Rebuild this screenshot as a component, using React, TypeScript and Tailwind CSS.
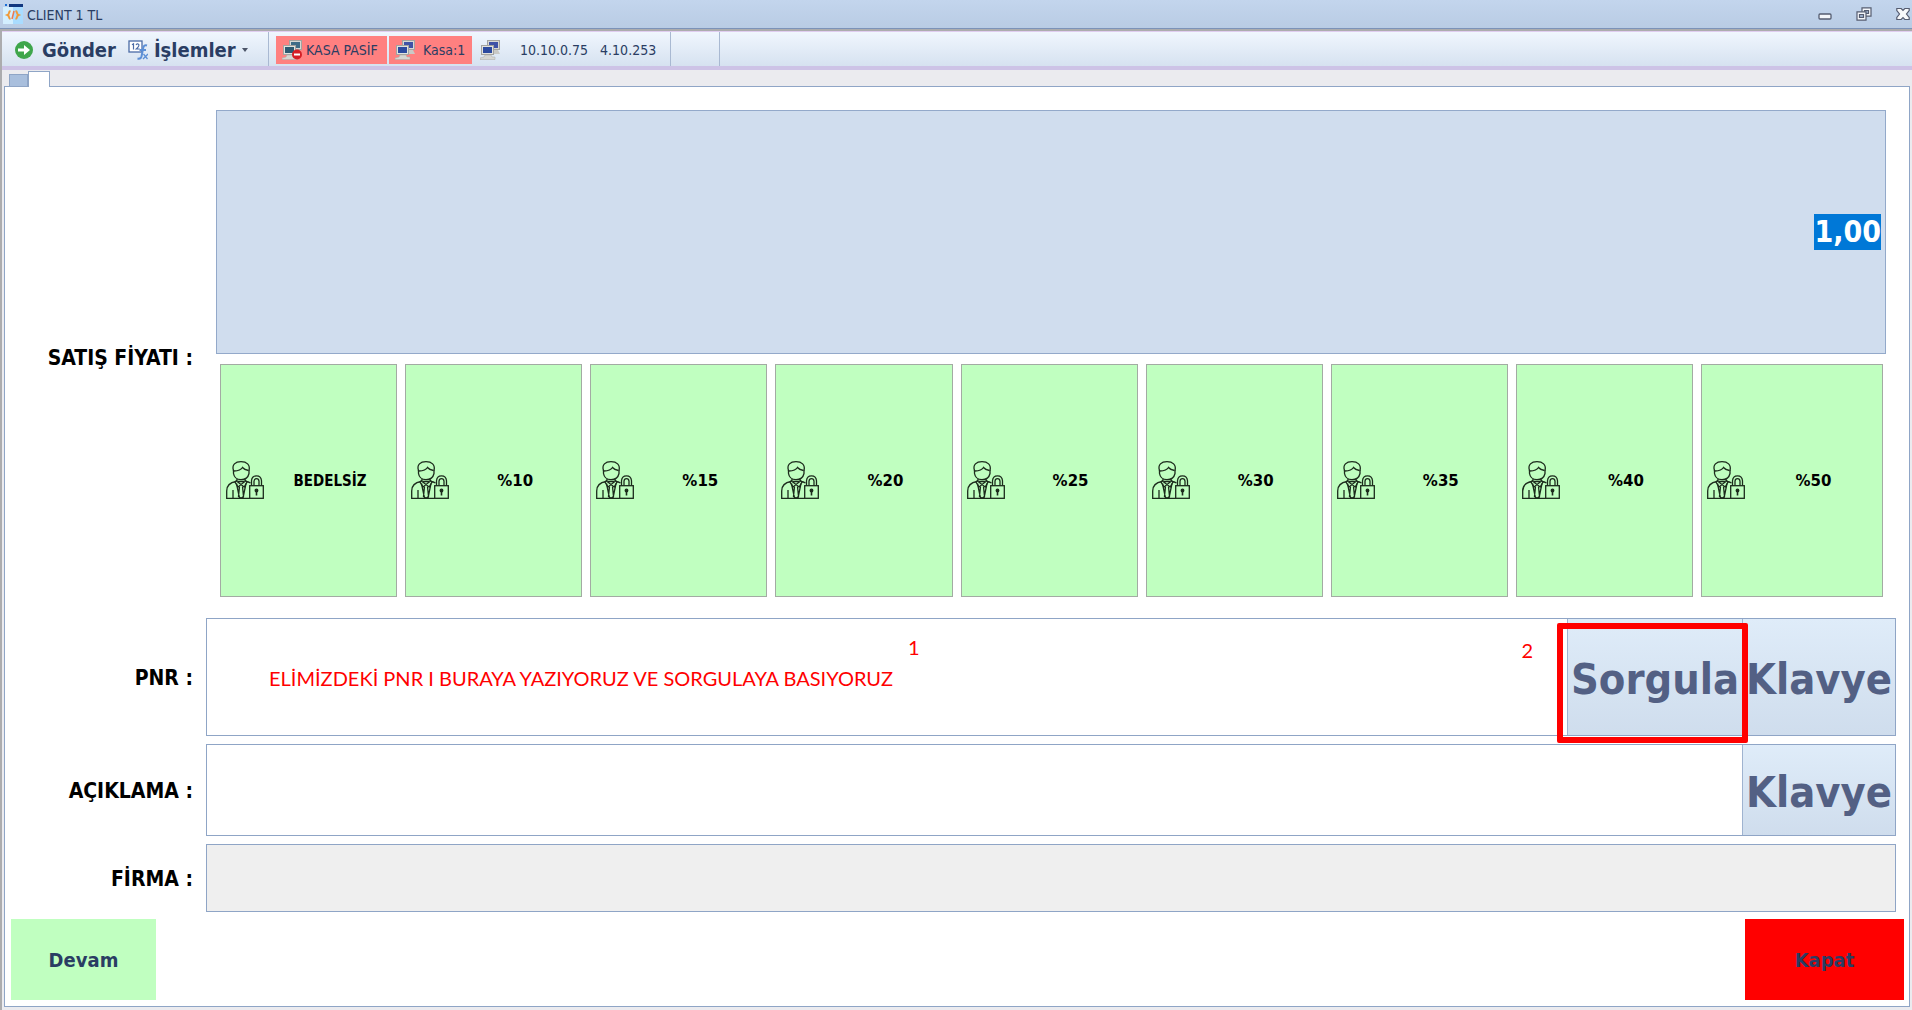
import { useEffect, useRef } from 'react'

const discounts = ['BEDELSİZ', '%10', '%15', '%20', '%25', '%30', '%35', '%40', '%50']

function AppLogo() {
  return (
    <svg viewBox="0 0 20 20" className="size-5" aria-hidden="true">
      <rect width="20" height="20" fill="#d3efff" />
      <path d="M10 3h10v17H10z" fill="#a9dcff" />
      <path d="M0 0h20v3H6z" fill="#12377f" />
      <path d="M0 0h6v3H0z" fill="#c1d3eb" />
      <path d="M2 0h2v2H2z" fill="#1c6fd6" />
      <path d="M7.500 7C5 7.500 7 10 4.500 11c2.500 1 .5 3.500 3 4M12.500 7c2.500.5.5 3 3 4-2.500 1-.5 3.500-3 4" fill="none" stroke="#f09a3a" strokeWidth="2" />
      <path d="M11 7L9 15" stroke="#ee7a50" strokeWidth="1.500" />
    </svg>
  )
}

function SendIcon() {
  return (
    <svg viewBox="0 0 20 20" className="size-5" aria-hidden="true">
      <circle cx="10" cy="10" r="9" fill="#3fa64b" />
      <path d="M4 8.500h6V5l6 5-6 5v-3.500H4z" fill="#fff" />
    </svg>
  )
}

function FormulaIcon() {
  return (
    <svg viewBox="0 0 20 20" className="size-5" aria-hidden="true">
      <rect x="1" y="1" width="13" height="11" fill="#fff" stroke="#4a6ba6" strokeWidth="1.300" />
      <path d="M4 4.800l1.500-1V9.500M8 5q1.200-1.800 2.700-.6 1 1.500-2.400 4.600h3.400" fill="none" stroke="#4a6ba6" strokeWidth="1.200" />
      <path d="M19 5.500q-3.200-1-3.800 2.500l-1.700 8.500q-.8 2.800-4 2M11.500 10h6.500" fill="none" stroke="#5c8fd6" strokeWidth="2" />
      <path d="M15.500 14l4 5M20 14l-5 5" stroke="#5c8fd6" strokeWidth="1.300" />
    </svg>
  )
}

function ComputersIcon({ blocked = false }: { blocked?: boolean }) {
  return (
    <svg viewBox="0 0 20 20" className="size-5" aria-hidden="true">
      <rect x="7.500" y=".5" width="12" height="9" fill="#d8d8d4" stroke="#a3a3a0" />
      <rect x="9" y="2" width="9" height="6" fill={blocked ? '#3f6c87' : '#3f52a6'} />
      <path d="M14 10h4l2 4h-6z" fill="#c9c9c6" />
      <rect x="1.500" y="5.500" width="12" height="9" fill="#e2e2de" stroke="#a3a3a0" />
      <rect x="3" y="7" width="9" height="6" fill={blocked ? '#2c5a72' : '#2c4a9f'} />
      <path d="M5 15h6l1 2h3v2.500H0V18l4-1z" fill="#d6d6d2" stroke="#a8a8a4" strokeWidth=".5" />
      {blocked && (
        <g>
          <circle cx="15" cy="14.500" r="5" fill="#d61f26" />
          <path d="M12 13.500h6v2h-6z" fill="#fff" />
        </g>
      )}
    </svg>
  )
}

function UserLockIcon() {
  return (
    <svg viewBox="0 0 38 38" className="size-[38px] shrink-0" fill="none" stroke="#1c2b1c" strokeWidth="1.300" aria-hidden="true">
      <path d="M7.500 9.500C5.500 3.500 9.500.7 15 .7s9.500 2.800 8 8.800" />
      <path d="M7.500 9v3.500q1 6 7.500 6.200 6.700-.2 8-6.200V9" />
      <path d="M8 10q6.500-.2 8.500-3.500 2 2.500 6 3" />
      <path d="M11 18v2.500l4 3 4-3V18M11 19l-2 2 3 5 3-2.500 3.200 2.500 2.800-5-2-2M12 20.500h6" />
      <path d="M10 20.500Q.7 22 .7 30v7.300h23M7 29v8M10.500 22.500l3 14.500M20 22.500L17 37M13.500 25.500l-1 10 2.500 1.800 2.500-1.800-1-10M20 20.500q2.500.2 4.500 1.500" />
      <rect x="23.700" y="24.700" width="13.600" height="12.600" />
      <path d="M25.500 24.500v-4.700q.3-5 5-5t5 5v4.700M28 24.500v-4.300q.2-2.500 2.500-2.500t2.500 2.500v4.300" />
      <circle cx="30.500" cy="29.500" r="1.300" fill="#1c2b1c" />
      <path d="M30.500 30v4.500" strokeWidth="1.600" />
    </svg>
  )
}

function WindowButtons() {
  return (
    <div className="flex items-center gap-6">
      <button type="button" aria-label="Küçült">
        <svg viewBox="0 0 14 14" className="h-3.5 w-3.5">
          <rect x="1" y="7" width="12" height="5" rx="1" fill="#f4f6fa" stroke="#555c70" strokeWidth="1.300" />
        </svg>
      </button>
      <button type="button" aria-label="Geri yükle">
        <svg viewBox="0 0 16 14" className="h-3.5 w-4" fill="#f4f6fa" stroke="#555c70" strokeWidth="1.200">
          <path d="M6 .8h9v8.400H6z" />
          <path d="M8.500 3.500h4v3h-4z" fill="#9eb0cc" />
          <path d="M1 4.800h9v8.400H1z" />
          <path d="M3.500 7.500h4v3h-4z" fill="#9eb0cc" />
        </svg>
      </button>
      <button type="button" aria-label="Kapat">
        <svg viewBox="0 0 14 14" className="h-3.5 w-3.5">
          <path d="M.8 1.500h4.400L7 3.300l1.800-1.800h4.400v2L10.500 7l2.700 3.500v2H8.800L7 10.700l-1.800 1.800H.8v-2L3.500 7 .8 3.500z" fill="#f8f9fb" stroke="#555c70" strokeWidth="1.200" />
        </svg>
      </button>
    </div>
  )
}

const fieldButton =
  'border-l border-[#9fb3d0] bg-linear-to-b from-[#dfecf9] to-[#cfdded] pt-1 text-center text-[43px] font-bold text-[#536084]'
const label = 'w-[188px] shrink-0 text-right text-[21px] font-bold text-black'
const note = 'pointer-events-none absolute font-[Lato,sans-serif] text-[20px] leading-8 text-[#ff0000]'

export default function App() {
  const priceRef = useRef<HTMLInputElement>(null)

  // The price starts selected so that typing replaces it
  useEffect(() => {
    priceRef.current?.focus()
    priceRef.current?.select()
  }, [])

  return (
    <div className="flex h-screen flex-col bg-[#ebebef] font-['DejaVu_Sans_Condensed','DejaVu_Sans',sans-serif] text-[#2a3d63]">
      {/* Title bar */}
      <header className="flex h-[29px] shrink-0 items-center justify-between border-b border-[#7c93b8] bg-linear-to-b from-[#c3d5ed] to-[#b9cce4] pl-[3px] pr-[2px]">
        <div className="flex items-center gap-1">
          <AppLogo />
          <span className="pt-0.5 text-[14px]">CLIENT 1 TL</span>
        </div>
        <WindowButtons />
      </header>

      <div className="flex min-h-0 flex-1 flex-col border-l-2 border-t-2 border-[#acacae]">
        {/* Toolbar */}
        <nav className="flex h-[39px] shrink-0 items-stretch border-b-4 border-t border-b-[#cdc3e6] border-t-[#e0cdf0] bg-linear-to-b from-[#f0f6fe] to-[#d6e2f0]">
          <div className="flex w-[267px] items-center border-r border-[#a9b9d2] pl-3 pt-0.5">
            <button type="button" className="flex items-center gap-2 text-[20px] font-bold">
              <SendIcon />
              Gönder
            </button>
            <button type="button" className="ml-3 flex items-center gap-1.5 text-[20px] font-bold">
              <FormulaIcon />
              İşlemler
              <svg viewBox="0 0 6 4" className="h-1 w-1.5" aria-hidden="true">
                <path d="M0 0h6L3 4z" fill="#4b5468" />
              </svg>
            </button>
          </div>
          <div className="flex w-[402px] items-center border-r border-[#a9b9d2] pl-[7px] pt-0.5 text-[14px]">
            <span className="flex h-7 w-[111px] items-center gap-1 bg-[#ff8080] pl-1.5">
              <ComputersIcon blocked />
              KASA PASİF
            </span>
            <span className="ml-0.5 flex h-7 w-[83px] items-center gap-2 bg-[#ff8080] pl-1.5">
              <ComputersIcon />
              Kasa:1
            </span>
            <span className="ml-2 flex items-center">
              <ComputersIcon />
            </span>
            <span className="ml-5">10.10.0.75</span>
            <span className="ml-3">4.10.253</span>
          </div>
          <div className="w-[49px] border-r border-[#a9b9d2]" />
        </nav>

        {/* Tabs */}
        <div className="flex h-4 shrink-0 items-end pl-[7px]" role="tablist">
          <button type="button" role="tab" aria-label="Liste" className="h-3 w-[19px] border border-b-0 border-[#8fa5c6] bg-[#a9bfdd]" />
          <button type="button" role="tab" aria-selected="true" aria-label="Satış" className="z-10 -mb-px h-4 w-[22px] border border-b-0 border-[#8fa5c6] bg-white" />
        </div>

        <main className="mx-0.5 mb-[3px] flex min-h-0 flex-1 flex-col border border-[#8fa5c6] bg-white pt-[23px]">
          <div className="flex min-h-0 flex-[487]">
            <label htmlFor="price" className={label + ' self-center pt-2.5'}>
              SATIŞ FİYATI :
            </label>
            <div className="ml-[23px] mr-[23px] flex min-w-0 flex-1 flex-col gap-2.5">
              <input
                id="price"
                ref={priceRef}
                defaultValue="1,00"
                className="min-h-0 w-full flex-[243] border border-[#93a9ca] bg-[#d0ddee] pr-1 text-right text-[30px] leading-9 font-bold text-black outline-none selection:bg-[#0078d7] selection:text-white"
              />
              <div className="flex min-h-0 flex-[234] gap-2 pl-1 pr-[3px]">
                {discounts.map((name) => (
                  <button
                    key={name}
                    type="button"
                    className="flex min-w-0 flex-[177] items-center border border-[#a3aba3] bg-[#c0ffc0] pl-[5px] text-[15px] font-bold text-black last:flex-[182]"
                  >
                    <UserLockIcon />
                    <span className={name.startsWith('%') ? "flex-1 pt-0.5 text-center font-['DejaVu_Sans',sans-serif]" : 'flex-1 pt-0.5 text-center'}>
                      {name}
                    </span>
                  </button>
                ))}
              </div>
            </div>
          </div>

          <div className="mt-[21px] flex min-h-0 flex-[118] items-center">
            <label htmlFor="pnr" className={label + ' pt-1'}>PNR :</label>
            <div className="relative ml-[13px] mr-[13px] flex h-full min-w-0 flex-1 border border-[#8fa5c6]">
              <input id="pnr" className="min-w-0 flex-1 bg-white px-3 text-3xl outline-none" />
              <button type="button" className={fieldButton + ' w-[175px]'}>Sorgula</button>
              <button type="button" className={fieldButton + ' w-[153px]'}>Klavye</button>

              {/* Notes for the cashier, drawn over the field */}
              <p className={note + ' left-[62px] top-[43px]'}>
                ELİMİZDEKİ PNR I BURAYA YAZIYORUZ VE SORGULAYA BASIYORUZ
              </p>
              <span className={note + ' left-[701px] top-[12px]'}>1</span>
              <span className={note + ' right-[362px] top-[15px]'}>2</span>
              <div className="pointer-events-none absolute -bottom-2 right-[147px] top-1 w-[191px] rounded-xs border-[6px] border-[#ff0000]" />
            </div>
          </div>

          <div className="mt-2 flex min-h-0 flex-[92] items-center">
            <label htmlFor="note" className={label + ' pt-1'}>AÇIKLAMA :</label>
            <div className="ml-[13px] mr-[13px] flex h-full min-w-0 flex-1 border border-[#8fa5c6]">
              <input id="note" className="min-w-0 flex-1 bg-white px-3 text-3xl outline-none" />
              <button type="button" className={fieldButton + ' w-[153px]'}>Klavye</button>
            </div>
          </div>

          <div className="mt-2 flex min-h-0 flex-[68] items-center">
            <label htmlFor="company" className={label + ' pt-1'}>FİRMA :</label>
            <input
              id="company"
              readOnly
              className="ml-[13px] mr-[13px] h-full min-w-0 flex-1 border border-[#8fa5c6] bg-[#efefef] px-3 text-3xl outline-none"
            />
          </div>

          <div className="mb-1.5 mt-[7px] flex min-h-0 flex-[81] justify-between pl-1.5 pr-[5px]">
            <button type="button" className="w-[145px] bg-[#c0ffc0] text-xl font-bold">Devam</button>
            <button type="button" className="w-[159px] bg-[#ff0000] text-xl font-bold">Kapat</button>
          </div>
        </main>
      </div>
    </div>
  )
}
